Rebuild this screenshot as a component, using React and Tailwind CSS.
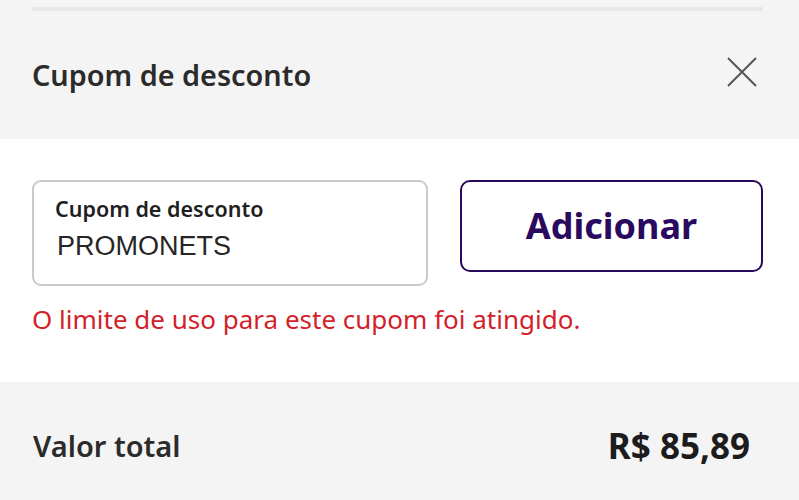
export default function App() {
  return (
    <div
      className="w-[799px] h-[500px] overflow-hidden bg-white text-[#2b2b2b]"
      style={{ fontFamily: '"Noto Sans", "Open Sans", sans-serif' }}
    >
      {/* HEADER */}
      <div className="bg-[#f4f4f4] h-[139px] pl-[32px] pr-[36px] pt-[7px]">
        <div className="h-[4px] bg-[#e8e8e8]"></div>
        <div className="flex items-center justify-between h-[128px]">
          <h2 className="text-[28.8px] font-semibold">Cupom de desconto</h2>
          <button className="mr-[6px] mb-[6px] text-[#555]">
            <svg width="30" height="30" viewBox="0 0 30 30" fill="none" stroke="currentColor" strokeWidth="2">
              <path d="M1 1 L29 29 M29 1 L1 29" />
            </svg>
          </button>
        </div>
      </div>

      {/* COUPON FORM */}
      <div className="bg-white h-[243px] pl-[32px] pr-[36px] pt-[41px]">
        <div className="flex gap-[32px] items-start">
          <div className="w-[396px] h-[106px] border-2 border-[#cacaca] rounded-[9px] pl-[21px] pt-[13px]">
            <p className="text-[21.5px] font-semibold text-[#1f1f1f] leading-[28px]">Cupom de desconto</p>
            <p
              className="text-[27px] text-[#262626] leading-[34px] mt-[6px] ml-[2px]"
              style={{ fontFamily: '"Liberation Sans", Arial, sans-serif' }}
            >
              PROMONETS
            </p>
          </div>
          <button className="flex-1 h-[92px] border-2 border-[#2a0a5e] rounded-[10px] text-[36px] font-bold text-[#2a0a5e]">
            Adicionar
          </button>
        </div>
        <p className="mt-[14px] text-[26px] text-[#d21f2b]">O limite de uso para este cupom foi atingido.</p>
      </div>

      {/* TOTAL */}
      <div className="bg-[#f4f4f4] h-[118px] pl-[33px] pr-[49px] flex items-center justify-between pt-[10px]">
        <span className="text-[29px] font-semibold">Valor total</span>
        <span className="text-[35px] font-bold text-[#1c1c1c]">R$ 85,89</span>
      </div>
    </div>
  );
}
